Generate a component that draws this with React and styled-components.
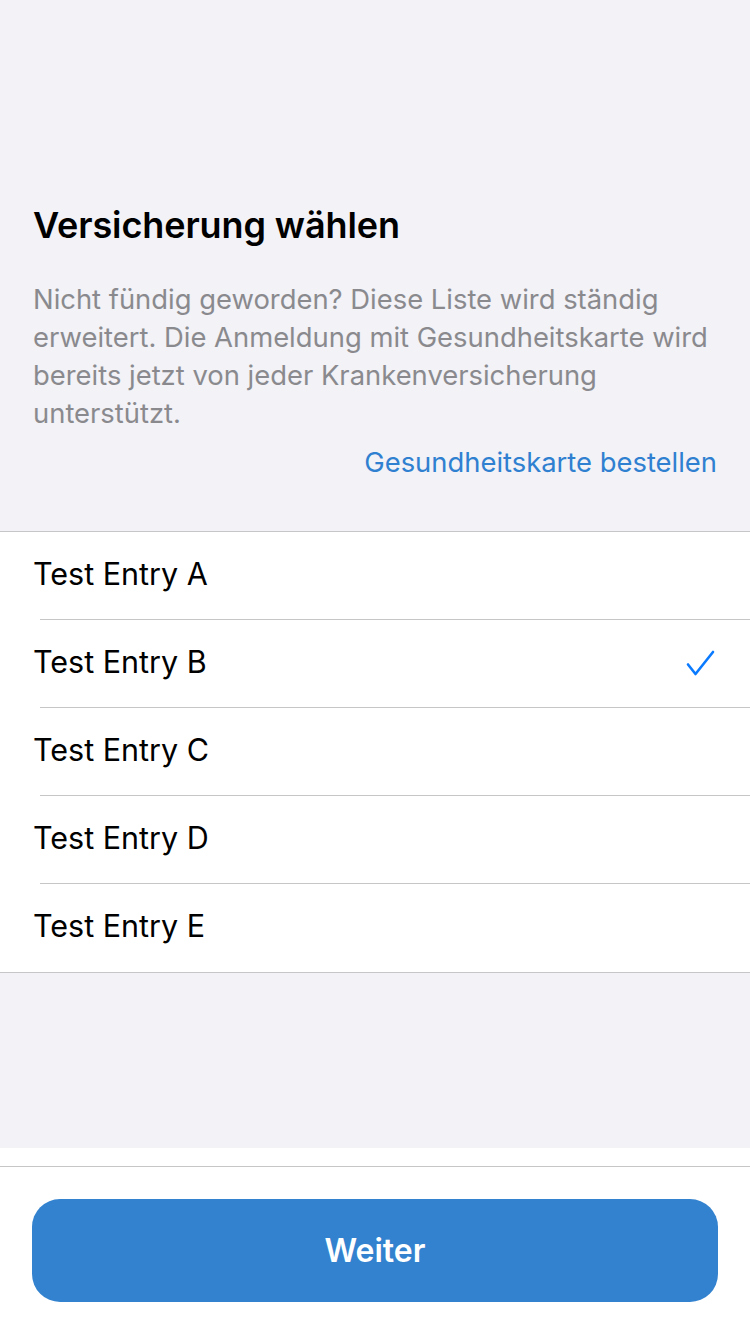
import React, { useState } from "react";
import styled, { createGlobalStyle } from "styled-components";

const GlobalStyle = createGlobalStyle`
  html, body {
    margin: 0;
    padding: 0;
    background: #f2f2f7;
  }
  body {
    font-family: Inter, "Noto Sans", "Liberation Sans", sans-serif;
    -webkit-font-smoothing: antialiased;
  }
`;

const Screen = styled.div`
  width: 750px;
  min-height: 1334px;
  display: flex;
  flex-direction: column;
  background: #f2f2f7;
`;

const Intro = styled.header`
  padding: 203px 33px 50px 33px;
  display: flex;
  flex-direction: column;
`;

const Title = styled.h1`
  margin: 0;
  font-size: 36px;
  font-weight: 600;
  color: #000;
  letter-spacing: -0.1px;
  line-height: 44px;
`;

const Hint = styled.p`
  margin: 33px 0 0 0;
  font-size: 27.4px;
  line-height: 38px;
  color: #8a8a8e;
`;

const OrderLink = styled.a`
  align-self: flex-end;
  margin-top: 11px;
  font-size: 27.4px;
  line-height: 38px;
  color: #2f80d0;
  text-decoration: none;
  cursor: pointer;
`;

const List = styled.ul`
  list-style: none;
  margin: 0;
  padding: 0;
  background: #fff;
  border-top: 1px solid #c6c6c8;
  border-bottom: 1px solid #c6c6c8;
`;

const Row = styled.li`
  position: relative;
  height: 88px;
  display: flex;
  align-items: center;
  justify-content: space-between;
  padding: 0 34px 0 33px;
  font-size: 30.5px;
  color: #000;
  cursor: pointer;

  & + &::before {
    content: "";
    position: absolute;
    top: -1px;
    left: 40px;
    right: 0;
    height: 1px;
    background: #c6c6c8;
  }
`;

const Label = styled.span`
  margin-bottom: 5px;
`;

const Check = styled.svg`
  width: 30px;
  height: 30px;
  color: #0a7aff;
`;

const Spacer = styled.div`
  flex: 1;
`;

const Footer = styled.footer`
  background: #fff;
  padding-top: 18px;
`;

const FooterInner = styled.div`
  border-top: 1px solid #c6c6c8;
  padding: 32px;
`;

const PrimaryButton = styled.button`
  width: 100%;
  height: 103px;
  border: none;
  border-radius: 28px;
  background: #3282cf;
  color: #fff;
  font-family: inherit;
  font-size: 32px;
  font-weight: 600;
  cursor: pointer;
`;

const entries = ["Test Entry A", "Test Entry B", "Test Entry C", "Test Entry D", "Test Entry E"];

const App = () => {
    const [selected, setSelected] = useState("Test Entry B");

    return (
        <Screen>
            <GlobalStyle />
            <Intro>
                <Title>Versicherung wählen</Title>
                <Hint>
                    Nicht fündig geworden? Diese Liste wird ständig erweitert. Die Anmeldung mit
                    Gesundheitskarte wird bereits jetzt von jeder Krankenversicherung unterstützt.
                </Hint>
                <OrderLink>Gesundheitskarte bestellen</OrderLink>
            </Intro>
            <List>
                {entries.map((entry) => (
                    <Row key={entry} onClick={() => setSelected(entry)}>
                        <Label>{entry}</Label>
                        {selected === entry && (
                            <Check viewBox="0 0 30 30" fill="none">
                                <path
                                    d="M2 15.5 L9.5 25 L27 3"
                                    stroke="currentColor"
                                    strokeWidth="2.6"
                                    strokeLinecap="round"
                                    strokeLinejoin="round"
                                />
                            </Check>
                        )}
                    </Row>
                ))}
            </List>
            <Spacer />
            <Footer>
                <FooterInner>
                    <PrimaryButton>Weiter</PrimaryButton>
                </FooterInner>
            </Footer>
        </Screen>
    );
};

export default App;
